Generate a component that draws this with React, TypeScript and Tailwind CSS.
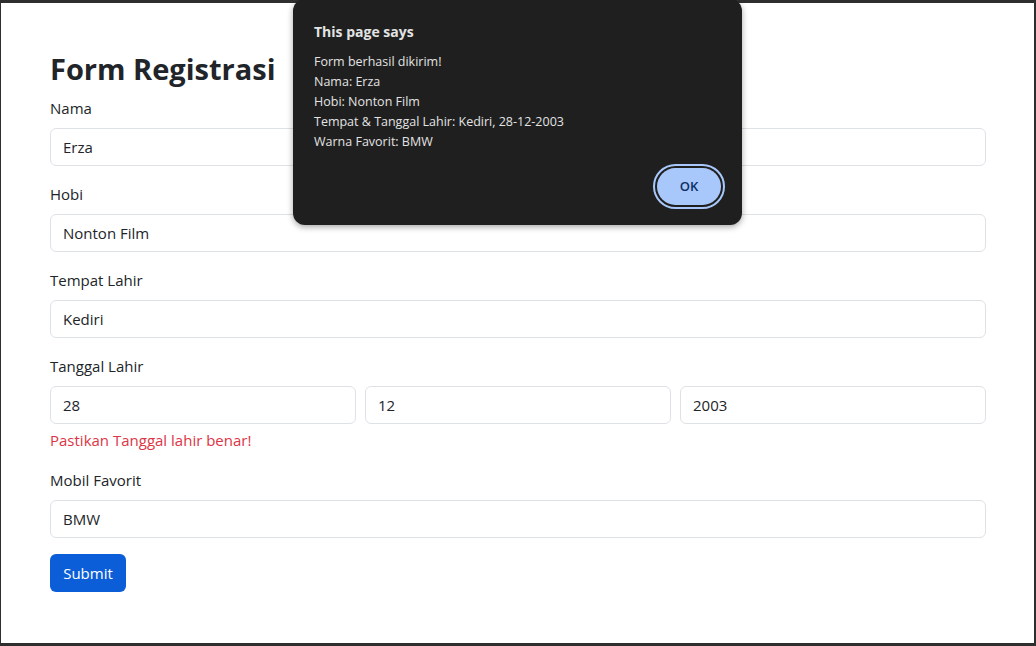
import React from "react";

const fields = [
  { label: "Nama", value: "Erza" },
  { label: "Hobi", value: "Nonton Film" },
  { label: "Tempat Lahir", value: "Kediri" },
];

function Input({ value }: { value: string }) {
  return (
    <div className="h-[38px] w-full rounded-[6px] border border-[#dee2e6] bg-white px-3 text-[15px] leading-[36px] text-[#212529]">
      {value}
    </div>
  );
}

export default function App() {
  const lines = [
    "Form berhasil dikirim!",
    "Nama: Erza",
    "Hobi: Nonton Film",
    "Tempat & Tanggal Lahir: Kediri, 28-12-2003",
    "Warna Favorit: BMW",
  ];

  return (
    <div
      className="relative h-[646px] w-[1036px] overflow-hidden bg-[#2e2e2e] pt-[3px] pb-[3px] pl-[1px] pr-[2px]"
      style={{ fontFamily: '"Open Sans", "Noto Sans", sans-serif' }}
    >
      {/* page */}
      <div className="h-full bg-white pl-[49px] pr-[48px] pt-[46px]">
        <h1 className="mb-[7px] text-[29px] font-bold leading-[40px] text-[#212529]">Form Registrasi</h1>

        {fields.map((f) => (
          <div key={f.label} className="mb-4">
            <label className="mb-2 block text-[15px] leading-6 text-[#212529]">{f.label}</label>
            <Input value={f.value} />
          </div>
        ))}

        <div className="mb-4">
          <label className="mb-2 block text-[15px] leading-6 text-[#212529]">Tanggal Lahir</label>
          <div className="grid grid-cols-3 gap-[9px]">
            <Input value="28" />
            <Input value="12" />
            <Input value="2003" />
          </div>
          <div className="mt-1 text-[15px] leading-6 text-[#dc3545]">Pastikan Tanggal lahir benar!</div>
        </div>

        <div className="mb-4">
          <label className="mb-2 block text-[15px] leading-6 text-[#212529]">Mobil Favorit</label>
          <Input value="BMW" />
        </div>

        <button className="h-[38px] w-[76px] rounded-[6px] bg-[#0b5ed7] text-[15px] leading-6 text-white">Submit</button>
      </div>

      {/* alert dialog */}
      <div className="absolute left-[293px] top-[-1px] h-[226px] w-[449px] rounded-[12px] bg-[#1f1f1f] px-[21px] pt-[23px] shadow-[0_2px_6px_rgba(0,0,0,0.35)]">
        <div className="text-[14px] font-bold leading-[20px] text-[#e3e3e3]">This page says</div>
        <div className="mt-[10px] text-[12.5px] leading-[20px] text-[#e3e3e3]">
          {lines.map((l) => (
            <div key={l}>{l}</div>
          ))}
        </div>
        <div className="mt-[12px] flex justify-end">
          <button className="mr-[-4px] h-[45px] w-[72px] rounded-full border-2 border-[#a8c7fa] p-[2px]">
            <span className="flex h-full w-full items-center justify-center rounded-full bg-[#a8c7fa] text-[13px] font-semibold text-[#0b2f66]">
              OK
            </span>
          </button>
        </div>
      </div>
    </div>
  );
}
